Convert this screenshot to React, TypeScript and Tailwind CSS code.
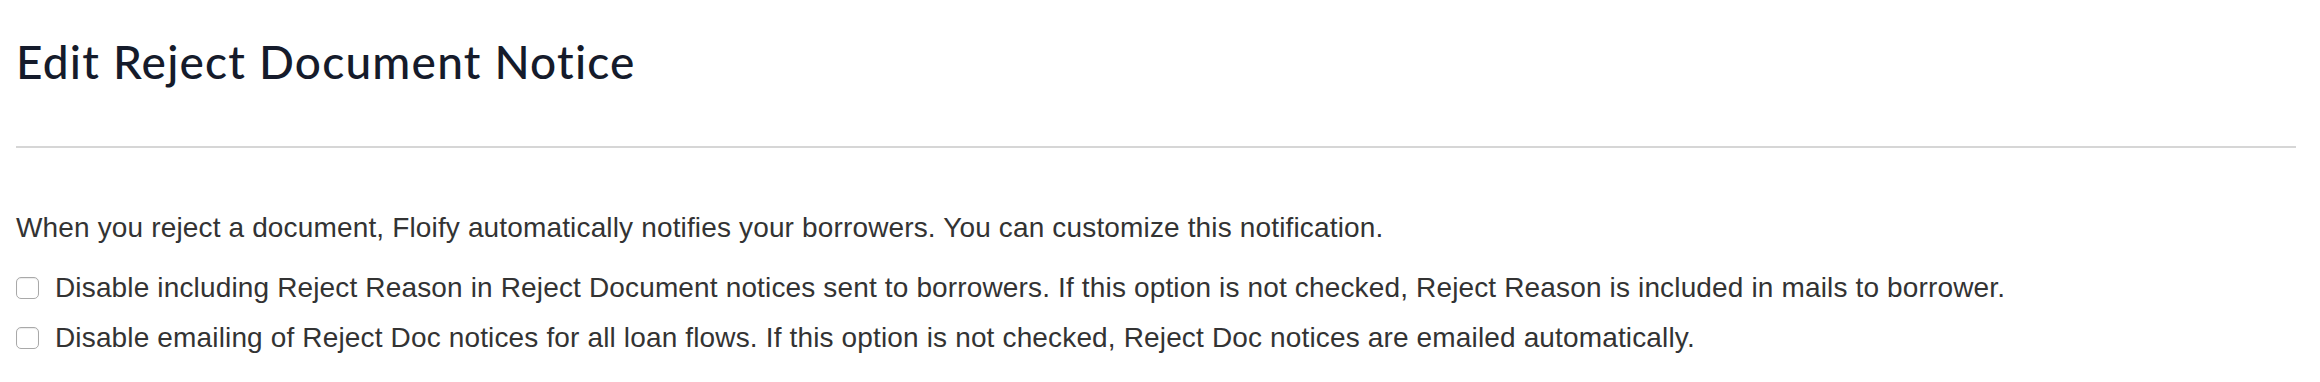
const options = [
  "Disable including Reject Reason in Reject Document notices sent to borrowers. If this option is not checked, Reject Reason is included in mails to borrower.",
  "Disable emailing of Reject Doc notices for all loan flows. If this option is not checked, Reject Doc notices are emailed automatically.",
];

const App = () => {
  return (
    <div className="min-h-[382px] bg-white pl-4 pr-6 pt-[34px]">
      <h1 className="font-['Lato',sans-serif] text-[46px] leading-[56px] font-medium tracking-[1.2px] text-[#151b2b]">
        Edit Reject Document Notice
      </h1>

      <div className="mt-[56px] h-[2px] bg-[#d6d6d6]" />

      <div className="mt-[60px] font-['Liberation_Sans',Arial,sans-serif] text-[28px] leading-[40px] tracking-[0.15px] text-[#333333]">
        <p>
          When you reject a document, Floify automatically notifies your borrowers. You can customize this notification.
        </p>

        <div className="mt-5 flex flex-col gap-[10px]">
          {options.map((label) => (
            <label key={label} className="flex items-center">
              <input
                type="checkbox"
                className="appearance-none w-[23px] h-[22px] rounded-[5px] border border-[#a9a9a9] bg-white shadow-[inset_0_1px_1px_rgba(0,0,0,0.08)]"
              />
              <span className="ml-4">{label}</span>
            </label>
          ))}
        </div>
      </div>
    </div>
  );
};

export default App;
